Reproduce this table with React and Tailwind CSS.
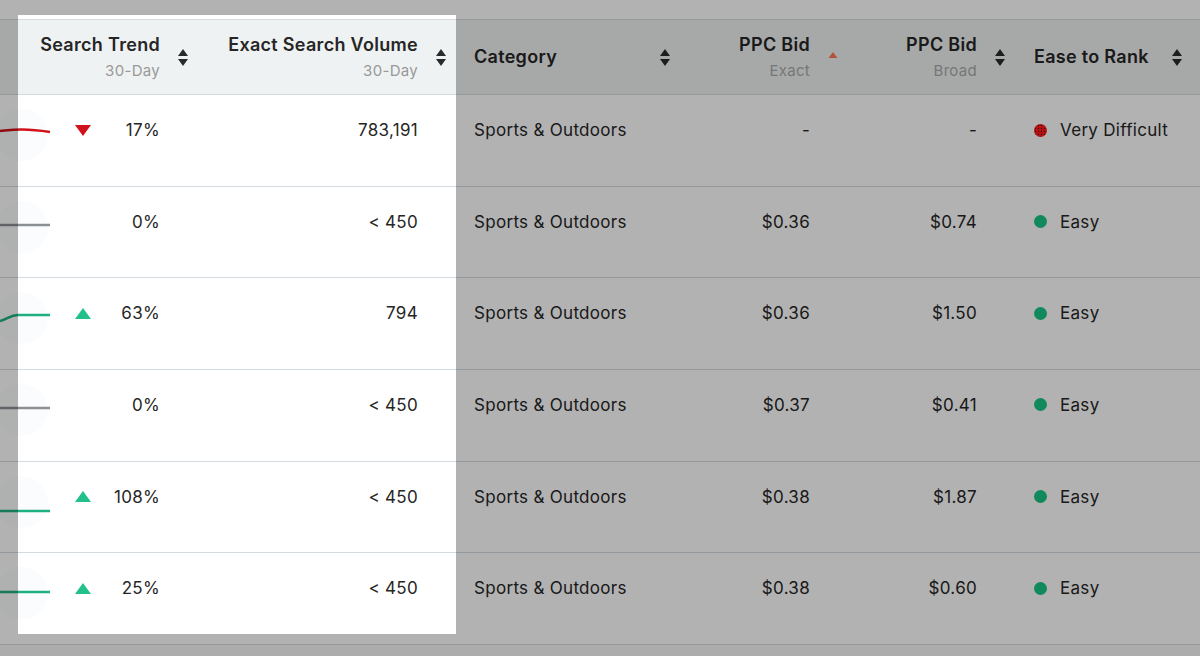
import React from 'react';

const ROWS = [
  { spark: 'M0 36 C 12 35, 22 33, 50 37', sparkColor: '#d0121b', trend: 'down', pct: '17%', volume: '783,191', exact: '-', broad: '-', ease: 'hard' },
  { spark: 'M0 38 L 50 38', sparkColor: '#8a8f93', trend: null, pct: '0%', volume: '< 450', exact: '$0.36', broad: '$0.74', ease: 'easy' },
  { spark: 'M0 43 C 8 41, 10 37, 18 37 L 50 37', sparkColor: '#1fb07f', trend: 'up', pct: '63%', volume: '794', exact: '$0.36', broad: '$1.50', ease: 'easy' },
  { spark: 'M0 38 L 50 38', sparkColor: '#8a8f93', trend: null, pct: '0%', volume: '< 450', exact: '$0.37', broad: '$0.41', ease: 'easy' },
  { spark: 'M0 49 L 50 49', sparkColor: '#1fb07f', trend: 'up', pct: '108%', volume: '< 450', exact: '$0.38', broad: '$1.87', ease: 'easy' },
  { spark: 'M0 39 L 50 39', sparkColor: '#1fb07f', trend: 'up', pct: '25%', volume: '< 450', exact: '$0.38', broad: '$0.60', ease: 'easy' },
];

function SortIcon() {
  return (
    <svg width="10" height="17" viewBox="0 0 10 17" className="shrink-0">
      <path d="M5 0 L10 7 L0 7 Z" fill="#2a2a2a" />
      <path d="M5 17 L10 10 L0 10 Z" fill="#2a2a2a" />
    </svg>
  );
}

function ActiveSort() {
  return (
    <svg width="10" height="17" viewBox="0 0 10 17" className="shrink-0">
      <path d="M5 3 L9.5 9 L0.5 9 Z" fill="#ff7658" />
    </svg>
  );
}

function Spark({ d, color }) {
  return (
    <svg width="60" height="92" viewBox="0 0 60 92" className="block">
      <circle cx="22" cy="40" r="26" fill="#fbfcfd" />
      <path d={d} fill="none" stroke={color} strokeWidth="2.5" strokeLinecap="butt" />
    </svg>
  );
}

function Trend({ dir }) {
  if (dir === 'down') {
    return (
      <svg width="16" height="11" viewBox="0 0 16 11"><path d="M0 0 L16 0 L8 11 Z" fill="#d0121b" /></svg>
    );
  }
  if (dir === 'up') {
    return (
      <svg width="16" height="11" viewBox="0 0 16 11"><path d="M8 0 L16 11 L0 11 Z" fill="#22c08a" /></svg>
    );
  }
  return <span className="w-4" />;
}

function HeadTwo({ title, sub, subColor }) {
  return (
    <div className="flex flex-col items-end whitespace-nowrap">
      <span className="text-[18px] leading-[22px] font-semibold tracking-[0.3px]">{title}</span>
      <span className={`text-[15px] leading-[18px] mt-[6px] tracking-[0.3px] ${subColor}`}>{sub}</span>
    </div>
  );
}

export default function App() {
  return (
    <div
      className="relative w-[1200px] h-[656px] overflow-hidden bg-white text-[#262626] pt-[19px]"
      style={{ fontFamily: 'Inter, "Open Sans", "Liberation Sans", sans-serif' }}
    >
      {/* header */}
      <div className="flex h-[76px] bg-[#eff2f3] border-y border-[#d3dbe0]">
        <div className="w-[60px] shrink-0" />
        <div className="w-[140px] shrink-0 flex items-center justify-end gap-[18px] pr-[12px]">
          <HeadTwo title="Search Trend" sub="30-Day" subColor="text-[#999]" />
          <SortIcon />
        </div>
        <div className="w-[256px] shrink-0 flex items-center justify-end gap-[18px] pr-[10px]">
          <HeadTwo title="Exact Search Volume" sub="30-Day" subColor="text-[#999]" />
          <SortIcon />
        </div>
        <div className="w-[234px] shrink-0 flex items-center justify-between pl-[18px] pr-[20px]">
          <span className="text-[18px] leading-[22px] font-semibold tracking-[0.3px]">Category</span>
          <SortIcon />
        </div>
        <div className="w-[160px] shrink-0 flex items-center justify-end gap-[18px] pr-[12px]">
          <HeadTwo title="PPC Bid" sub="Exact" subColor="text-[#aaa]" />
          <ActiveSort />
        </div>
        <div className="w-[165px] shrink-0 flex items-center justify-end gap-[18px] pr-[10px]">
          <HeadTwo title="PPC Bid" sub="Broad" subColor="text-[#aaa]" />
          <SortIcon />
        </div>
        <div className="w-[185px] shrink-0 flex items-center justify-between pl-[19px] pr-[18px]">
          <span className="text-[18px] leading-[22px] font-semibold tracking-[0.3px] whitespace-nowrap">Ease to Rank</span>
          <SortIcon />
        </div>
      </div>

      {/* rows */}
      {ROWS.map((r, i) => (
        <div key={i} className="flex h-[91.67px] border-b border-[#d3dbe0] text-[17px] leading-[22px] tracking-[0.3px] whitespace-nowrap">
          <div className="w-[60px] shrink-0 overflow-hidden">
            <Spark d={r.spark} color={r.sparkColor} />
          </div>
          <div className="w-[140px] shrink-0 flex items-start pt-[24px] pl-[15px] pr-[40px]">
            <div className="h-[22px] flex items-center"><Trend dir={r.trend} /></div>
            <span className="ml-auto">{r.pct}</span>
          </div>
          <div className="w-[256px] shrink-0 pt-[24px] pr-[38px] text-right">{r.volume}</div>
          <div className="w-[234px] shrink-0 pt-[24px] pl-[18px]">Sports &amp; Outdoors</div>
          <div className="w-[160px] shrink-0 pt-[24px] pr-[40px] text-right">{r.exact}</div>
          <div className="w-[165px] shrink-0 pt-[24px] pr-[38px] text-right">{r.broad}</div>
          <div className="w-[185px] shrink-0 pt-[24px] pl-[19px] flex items-start gap-[13px]">
            <div className="h-[22px] flex items-center">
              {r.ease === 'hard' ? (
                <span className="block w-[13px] h-[13px] rounded-full bg-[#ff1a1a] bg-[radial-gradient(circle,#400_30%,transparent_45%)] bg-[length:3px_3px]" />
              ) : (
                <span className="block w-[13px] h-[13px] rounded-full bg-[#1bc586]" />
              )}
            </div>
            <span>{r.ease === 'hard' ? 'Very Difficult' : 'Easy'}</span>
          </div>
        </div>
      ))}
      <div className="h-[40px] bg-[#f7f7f7]" />

      {/* dimming overlay around the highlighted columns */}
      <div className="absolute left-0 top-0 w-[1200px] h-[15px] bg-black/30" />
      <div className="absolute left-0 top-[634px] w-[1200px] h-[22px] bg-black/30" />
      <div className="absolute left-0 top-[15px] w-[18px] h-[619px] bg-black/30" />
      <div className="absolute left-[456px] top-[15px] w-[744px] h-[619px] bg-black/30" />
    </div>
  );
}
